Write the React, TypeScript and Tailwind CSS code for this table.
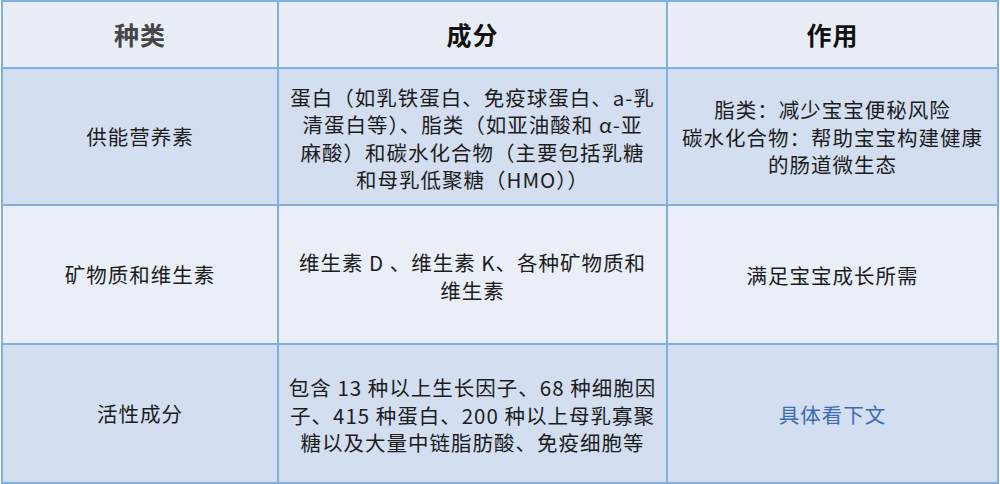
import React from "react";

const font = { fontFamily: '"Noto Sans CJK SC", "Noto Sans", sans-serif' };

const rows: { kind: string; parts: string[]; effect: string[]; link?: boolean }[] = [
  {
    kind: "供能营养素",
    parts: [
      "蛋白（如乳铁蛋白、免疫球蛋白、a-乳",
      "清蛋白等）、脂类（如亚油酸和 α-亚",
      "麻酸）和碳水化合物（主要包括乳糖",
      "和母乳低聚糖（HMO））",
    ],
    effect: ["脂类：减少宝宝便秘风险", "碳水化合物：帮助宝宝构建健康", "的肠道微生态"],
  },
  {
    kind: "矿物质和维生素",
    parts: ["维生素 D 、维生素 K、各种矿物质和", "维生素"],
    effect: ["满足宝宝成长所需"],
  },
  {
    kind: "活性成分",
    parts: [
      "包含 13 种以上生长因子、68 种细胞因",
      "子、415 种蛋白、200 种以上母乳寡聚",
      "糖以及大量中链脂肪酸、免疫细胞等",
    ],
    effect: ["具体看下文"],
    link: true,
  },
];

function Lines({ lines }: { lines: string[] }) {
  return (
    <>
      {lines.map((l, i) => (
        <div key={i} className="whitespace-nowrap">
          {l}
        </div>
      ))}
    </>
  );
}

export default function App() {
  return (
    <div className="w-[1000px] h-[484px] bg-white" style={font}>
      <div className="ml-[1px] w-[998px] h-[484px] bg-[#7fb0e0] p-[2px] grid grid-cols-[274px_387px_329px] grid-rows-[65px_135px_137px_137px] gap-[2px]">
        {/* header */}
        <div className="bg-[#e9edf6] flex items-center justify-center text-[25px] font-bold tracking-[1px] text-[#454545]">
          种类
        </div>
        <div className="bg-[#e9edf6] flex items-center justify-center text-[25px] font-bold tracking-[1px] text-[#111]">
          成分
        </div>
        <div className="bg-[#e9edf6] flex items-center justify-center text-[25px] font-bold tracking-[1px] text-[#111]">
          作用
        </div>

        {rows.map((r, i) => {
          const bg = i % 2 === 0 ? "bg-[#d3dff0]" : "bg-[#e9eef7]";
          return (
            <React.Fragment key={r.kind}>
              <div className={`${bg} flex items-center justify-center text-[20.5px] tracking-[1px] text-[#1c1c1c]`}>
                {r.kind}
              </div>
              <div className={`${bg} flex flex-col items-center justify-center pt-[4px] text-center text-[20.5px] leading-[27.5px] tracking-[1px] text-[#1c1c1c]`}>
                <Lines lines={r.parts} />
              </div>
              <div
                className={`${bg} flex flex-col items-center justify-center pt-[2px] text-center text-[20.5px] leading-[27.5px] tracking-[1px] ${
                  r.link ? "text-[#3b6bb3]" : "text-[#1c1c1c]"
                }`}
              >
                <Lines lines={r.effect} />
              </div>
            </React.Fragment>
          );
        })}
      </div>
    </div>
  );
}
